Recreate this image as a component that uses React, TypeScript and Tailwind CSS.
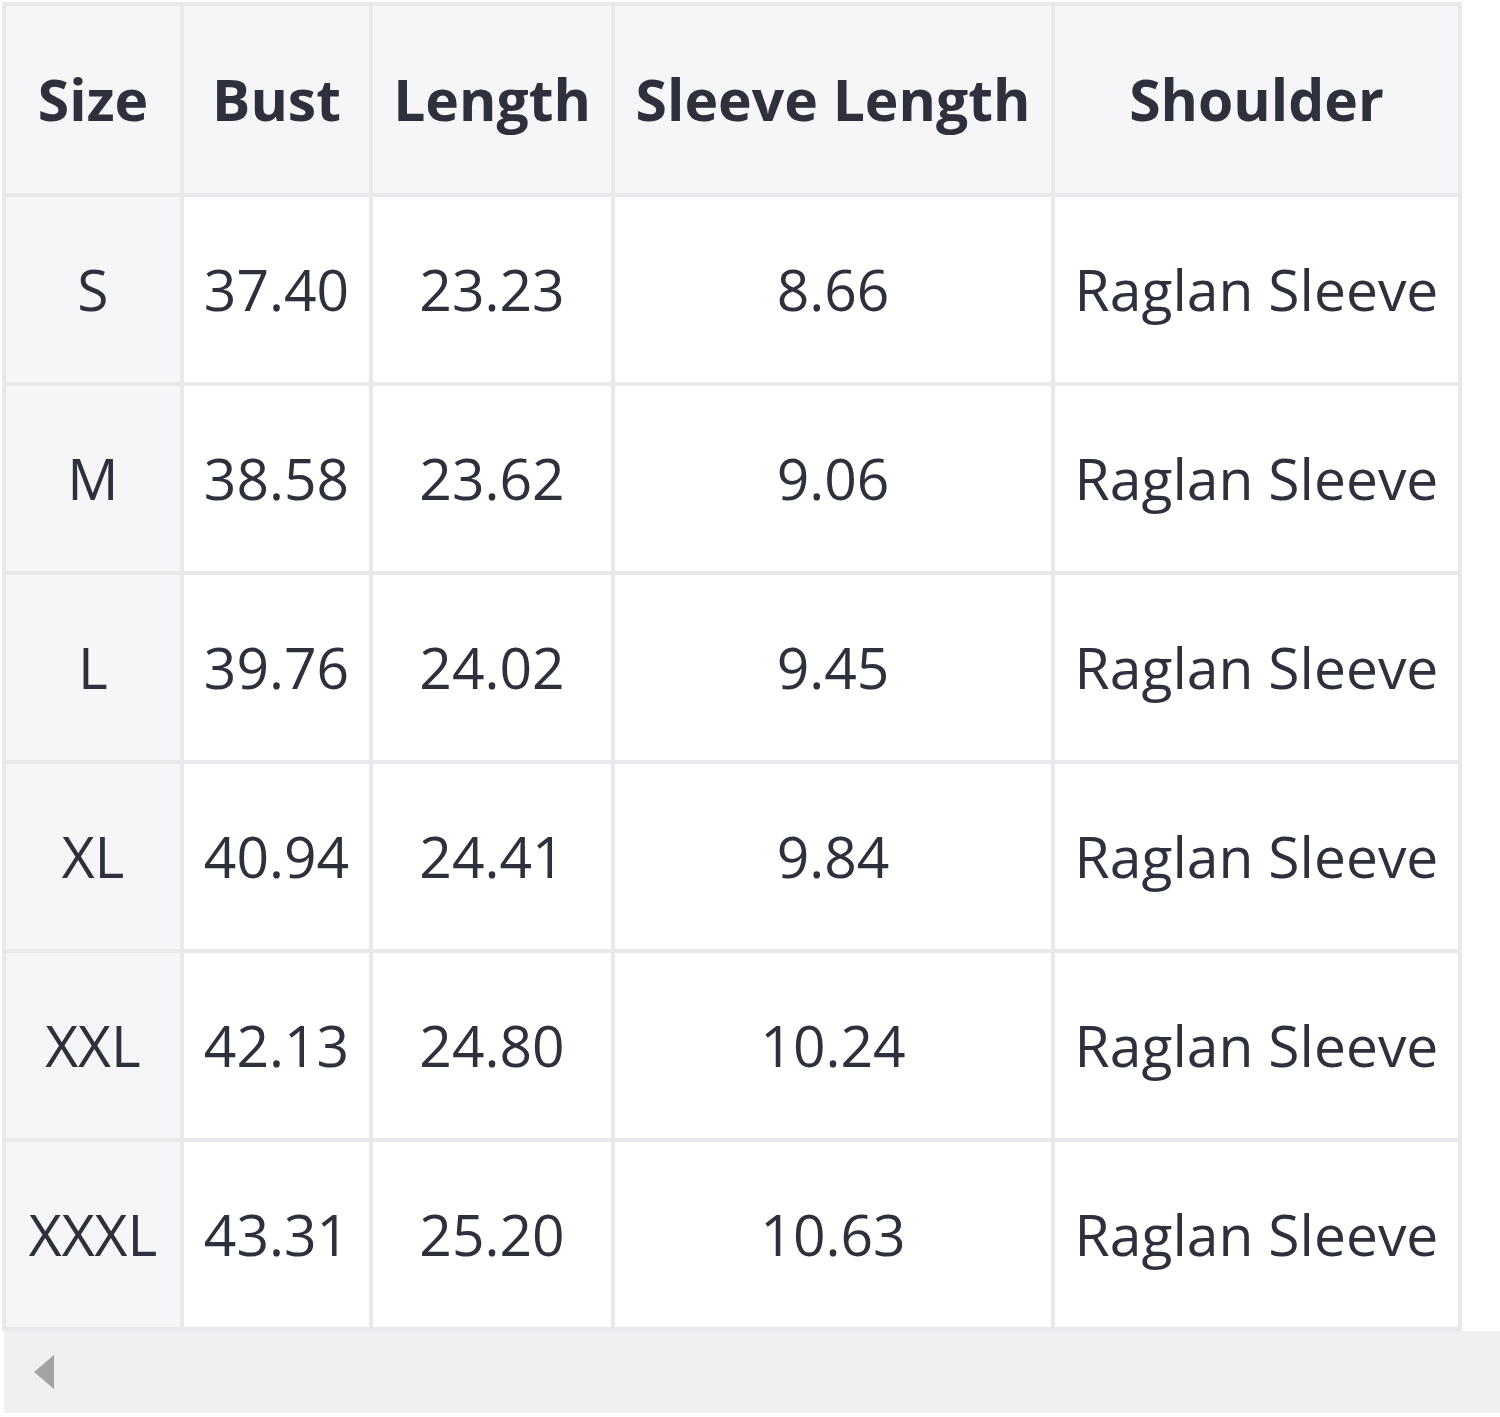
import React from "react";

const rows = [
  ["S", "37.40", "23.23", "8.66"],
  ["M", "38.58", "23.62", "9.06"],
  ["L", "39.76", "24.02", "9.45"],
  ["XL", "40.94", "24.41", "9.84"],
  ["XXL", "42.13", "24.80", "10.24"],
  ["XXXL", "43.31", "25.20", "10.63"],
];

const cell = "border-[4px] border-[#e9e9ed] text-center align-middle p-0 text-[57px]";

export default function App() {
  return (
    <div className="w-[1500px] h-[1417px] bg-white pt-[4px] pl-[4px] font-['Open_Sans',sans-serif] text-[#2e303c]">
      <table className="table-fixed border-collapse w-[1456px] -mt-[2px] -ml-[2px]">
        <colgroup>
          <col className="w-[178px]" />
          <col className="w-[189px]" />
          <col className="w-[242px]" />
          <col className="w-[440px]" />
          <col className="w-[407px]" />
        </colgroup>
        <thead>
          <tr className="h-[191px] bg-[#f6f6f8]">
            <th className={`${cell} font-bold`}>Size</th>
            <th className={`${cell} font-bold`}>Bust</th>
            <th className={`${cell} font-bold`}>Length</th>
            <th className={`${cell} font-bold`}>Sleeve Length</th>
            <th className={`${cell} font-bold`}>Shoulder</th>
          </tr>
        </thead>
        <tbody>
          {rows.map((r) => (
            <tr key={r[0]} className="h-[189px]">
              <td className={`${cell} bg-[#f6f6f8]`}>{r[0]}</td>
              <td className={cell}>{r[1]}</td>
              <td className={cell}>{r[2]}</td>
              <td className={cell}>{r[3]}</td>
              <td className={cell}>Raglan Sleeve</td>
            </tr>
          ))}
        </tbody>
      </table>
      {/* horizontal scrollbar */}
      <div className="h-[82px] bg-[#f0f0f0] flex items-center pl-[28px]">
        <svg width="24" height="38" viewBox="0 0 24 38">
          <polygon points="22,2 22,36 2,19" fill="#a3a3a3" />
        </svg>
      </div>
    </div>
  );
}
